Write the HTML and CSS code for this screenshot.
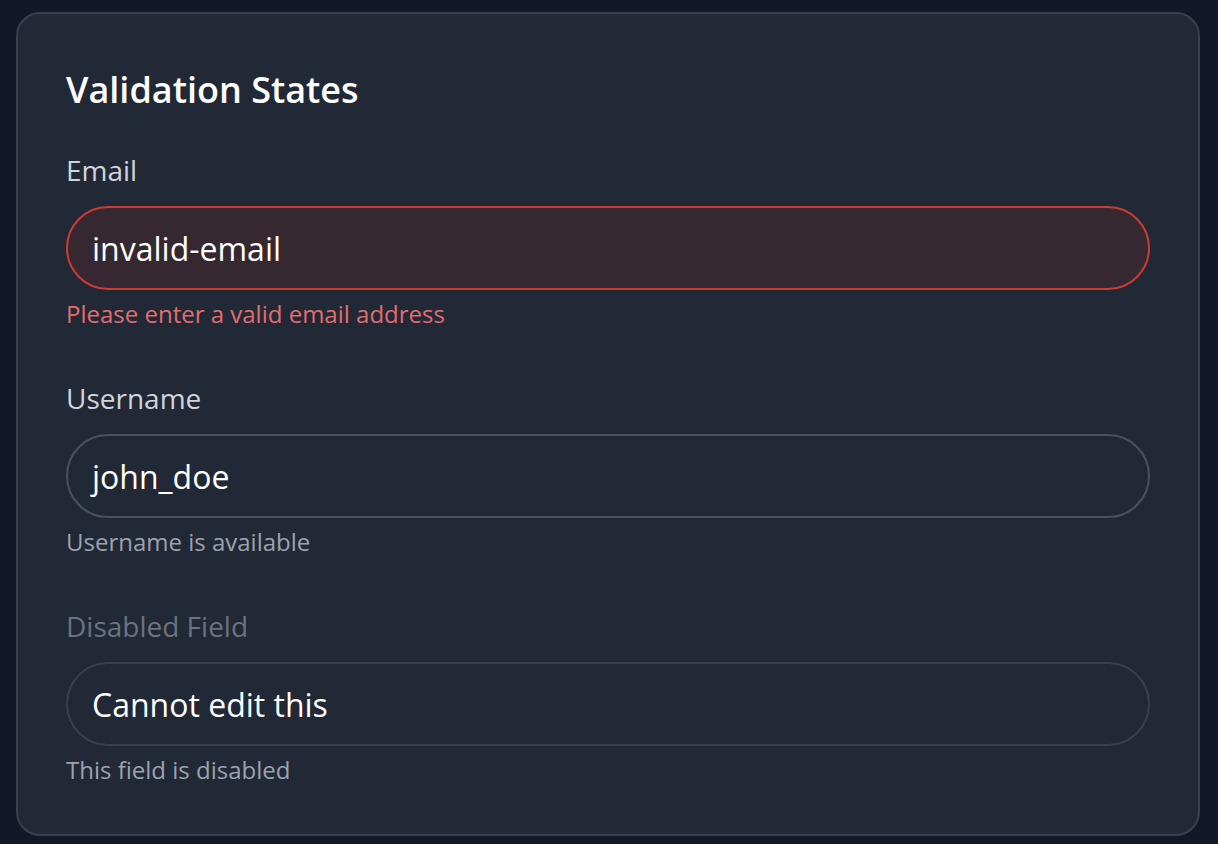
FILE: index.html
```html
<!DOCTYPE html>
<html lang="en">
<head>
<meta charset="utf-8">
<title>Validation States</title>
<link rel="stylesheet" href="styles.css">
</head>
<body>
<div class="card">
  <h2 class="title">Validation States</h2>
  <div class="fields">
    <div class="field">
      <label class="label">Email</label>
      <div class="input input-error">invalid-email</div>
      <p class="help help-error">Please enter a valid email address</p>
    </div>
    <div class="field">
      <label class="label">Username</label>
      <div class="input">john_doe</div>
      <p class="help">Username is available</p>
    </div>
    <div class="field">
      <label class="label label-disabled">Disabled Field</label>
      <div class="input input-disabled">Cannot edit this</div>
      <p class="help">This field is disabled</p>
    </div>
  </div>
</div>
</body>
</html>
```

FILE: styles.css
```css
html, body {
  margin: 0;
  padding: 0;
  background: #111827;
}
body {
  font-family: "Open Sans", "Noto Sans", sans-serif;
  padding: 12px 18px 0 16px;
}
.card {
  background: #212836;
  border: 2px solid #394150;
  border-radius: 24px;
  padding: 48px;
}
.title {
  margin: 0 0 32px;
  font-size: 36px;
  line-height: 56px;
  font-weight: 600;
  color: #ffffff;
}
.fields {
  display: flex;
  flex-direction: column;
  gap: 48px;
}
.field {
  display: flex;
  flex-direction: column;
}
.label {
  font-size: 28px;
  line-height: 40px;
  font-weight: 500;
  color: #d1d5db;
  margin-bottom: 16px;
}
.label-disabled {
  color: #6b7280;
}
.input {
  height: 84px;
  box-sizing: border-box;
  border: 2px solid #4a5160;
  border-radius: 42px;
  padding: 0 24px;
  display: flex;
  align-items: center;
  font-size: 32px;
  color: #ffffff;
  background: #212836;
}
.input-error {
  border-color: #cf3b33;
  background: #352830;
}
.input-disabled {
  border-color: #383f4d;
}
.help {
  margin: 8px 0 0;
  font-size: 24px;
  line-height: 32px;
  color: #9ca3af;
}
.help-error {
  color: #e26d6d;
}
```
